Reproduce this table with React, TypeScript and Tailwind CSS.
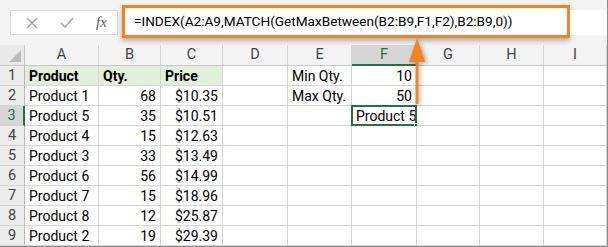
import React from 'react';

type Cell = { v?: string; right?: boolean; bold?: boolean; fill?: boolean };

const colLetters = ['A', 'B', 'C', 'D', 'E', 'F', 'G', 'H', 'I'];

const products: [string, string, string][] = [
  ['Product 1', '68', '$10.35'],
  ['Product 5', '35', '$10.51'],
  ['Product 4', '15', '$12.63'],
  ['Product 3', '33', '$13.49'],
  ['Product 6', '56', '$14.99'],
  ['Product 7', '15', '$18.96'],
  ['Product 8', '12', '$25.87'],
  ['Product 2', '19', '$29.39'],
];

function buildRows(): Cell[][] {
  const header: Cell[] = [
    { v: 'Product', bold: true, fill: true },
    { v: 'Qty.', bold: true, fill: true },
    { v: 'Price', bold: true, fill: true },
    {},
    { v: 'Min Qty.' },
    { v: '10', right: true },
    {},
    {},
    {},
  ];
  const body = products.map(([name, qty, price], i) => {
    const row: Cell[] = [
      { v: name },
      { v: qty, right: true },
      { v: price, right: true },
      {},
      {},
      {},
      {},
      {},
      {},
    ];
    if (i === 0) {
      row[4] = { v: 'Max Qty.' };
      row[5] = { v: '50', right: true };
    }
    if (i === 1) row[5] = { v: 'Product 5' };
    return row;
  });
  return [header, ...body];
}

const rows = buildRows();

function CancelIcon() {
  return (
    <svg width="12" height="12" viewBox="0 0 12 12">
      <path d="M1 1 L11 11 M11 1 L1 11" stroke="#a6a6a6" strokeWidth="1.4" fill="none" />
    </svg>
  );
}

function EnterIcon() {
  return (
    <svg width="14" height="11" viewBox="0 0 14 11">
      <path d="M1 6 L5 10 L13 1" stroke="#a6a6a6" strokeWidth="1.6" fill="none" />
    </svg>
  );
}

function FormulaBar() {
  return (
    <div className="flex h-[45px] items-start bg-[#f3f3f3] pl-[10px]">
      <div className="mt-[10px] flex h-[25px] w-[108px] items-center border border-[#dadada] bg-white">
        <span className="ml-[15px] flex w-[12px] justify-center">
          <CancelIcon />
        </span>
        <span className="ml-[22px] flex w-[14px] justify-center">
          <EnterIcon />
        </span>
        <span
          className="ml-[22px] text-[15px] italic text-[#5f5f5f]"
          style={{ fontFamily: '"Liberation Serif", serif' }}
        >
          fx
        </span>
      </div>
      <div className="ml-[4px] mt-[5px] flex h-[33px] w-[448px] items-center border-[3px] border-[#f5821f] bg-white pl-[9px] shadow-[0_3px_5px_rgba(0,0,0,0.28)]">
        <span className="whitespace-nowrap text-[13.6px] text-black">
          =INDEX(A2:A9,MATCH(GetMaxBetween(B2:B9,F1,F2),B2:B9,0))
        </span>
      </div>
      <div className="mt-[10px] h-[25px] flex-1 bg-white" />
    </div>
  );
}

function Arrow() {
  // orange pointer from the result cell up to the formula box
  return (
    <svg
      className="pointer-events-none absolute left-[407px] top-[37px] drop-shadow-[2px_1px_2px_rgba(0,0,0,0.3)]"
      width="20"
      height="68"
      viewBox="0 0 20 68"
    >
      <path d="M10 1 L18 25 L2 25 Z" fill="#f5821f" />
      <rect x="8.5" y="22" width="3" height="45" fill="#f5821f" />
    </svg>
  );
}

export default function App() {
  return (
    <div
      className="relative h-[247px] w-[608px] overflow-hidden border-b border-r border-[#8c8c8c] bg-white"
      style={{ fontFamily: 'Roboto, "Noto Sans", sans-serif' }}
    >
      <FormulaBar />

      <div className="grid grid-cols-[25px_74px_62px_62px_65px_64px_65px_63px_64px_63px] text-[14px]">
        {/* column headers */}
        <div className="relative h-[21px] border-b border-r border-[#c6c6c6] bg-[#e9e9e9]">
          <svg className="absolute bottom-[3px] right-[3px]" width="12" height="12" viewBox="0 0 12 12">
            <path d="M12 0 L12 12 L0 12 Z" fill="#bcbcbc" />
          </svg>
        </div>
        {colLetters.map((c) => (
          <div
            key={c}
            className={
              c === 'F'
                ? 'flex h-[21px] items-center justify-center border-b-2 border-r border-b-[#217346] border-r-[#d4d4d4] bg-[#d6d6d6] text-[14.5px] text-[#217346]'
                : 'flex h-[21px] items-center justify-center border-b border-r border-b-[#c6c6c6] border-r-[#d4d4d4] bg-[#f3f3f3] text-[14.5px] text-[#444]'
            }
          >
            {c}
          </div>
        ))}

        {rows.map((row, r) => (
          <React.Fragment key={r}>
            <div
              className={
                r === 2
                  ? 'flex h-[20px] items-center justify-center border-b border-r-2 border-b-[#d4d4d4] border-r-[#217346] bg-[#d6d6d6] text-[14.5px] text-[#217346]'
                  : 'flex h-[20px] items-center justify-center border-b border-r border-b-[#d4d4d4] border-r-[#b8b8b8] bg-[#ececec] text-[14.5px] text-[#444]'
              }
            >
              {r + 1}
            </div>
            {row.map((cell, c) => {
              const selected = r === 2 && c === 5;
              return (
                <div
                  key={c}
                  className={
                    'relative flex h-[20px] items-center whitespace-nowrap border-b border-r border-[#d4d4d4] px-[4px] leading-none text-black ' +
                    (cell.right ? 'justify-end ' : 'justify-start ') +
                    (cell.bold ? 'font-bold ' : '') +
                    (cell.fill ? 'bg-[#e2efda]' : 'bg-white')
                  }
                >
                  {cell.v}
                  {selected && (
                    <>
                      <div className="pointer-events-none absolute -left-[1px] -top-[1px] h-[21px] w-[66px] border-2 border-[#217346]" />
                      <div className="absolute -bottom-[4px] -right-[4px] h-[6px] w-[6px] border border-white bg-[#217346]" />
                    </>
                  )}
                </div>
              );
            })}
          </React.Fragment>
        ))}
      </div>

      <Arrow />
    </div>
  );
}
